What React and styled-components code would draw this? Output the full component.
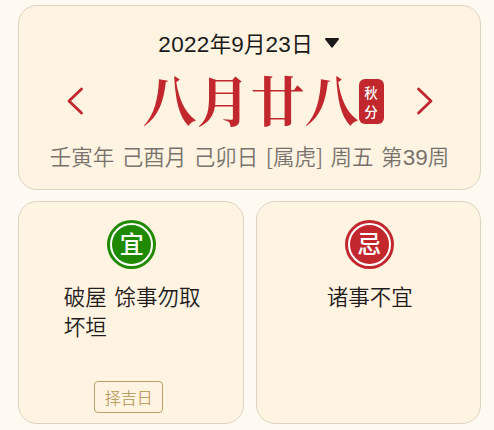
import React from 'react'
import styled, {createGlobalStyle} from 'styled-components'

const GlobalStyle = createGlobalStyle`
  * {
    box-sizing: border-box;
  }
  body {
    margin: 0;
    background-color: #fffaf1;
    font-family: "Liberation Sans", "Noto Sans CJK SC", sans-serif;
  }
`;

const Page = styled.div`
  width: 494px;
  height: 430px;
  padding: 5px 13px 0 18px;
  display: flex;
  flex-direction: column;
  gap: 11px;
  overflow: hidden;
`;

const Card = styled.section`
  display: flex;
  flex-direction: column;
  align-items: center;
  background-color: #fff3e2;
  border: 1px solid #ddd3c0;
  border-radius: 19px;
`;

const DateCard = styled(Card)`
  height: 185px;
  padding-top: 21px;
`;

const DateRow = styled.button`
  display: flex;
  align-items: center;
  gap: 11px;
  height: 30px;
  margin-right: 1px;
  padding: 0;
  border: none;
  background: transparent;
  font-family: inherit;
  font-size: 21.5px;
  color: #1a1a1a;
  white-space: nowrap;

  svg {
    margin-bottom: -1px;
  }
`;

const Digits = styled.span`
  font-size: 22.5px;
  letter-spacing: 0.3px;
`;

const LunarRow = styled.div`
  width: 100%;
  height: 80px;
  margin-top: 4px;
  padding: 0 46px 0 47px;
  display: flex;
  align-items: center;
  justify-content: space-between;
`;

const Arrow = styled.button`
  display: flex;
  padding: 0;
  border: none;
  background: transparent;
  color: #c1272d;
`;

const Lunar = styled.div`
  display: flex;
  align-items: center;
  margin-left: 26px;
`;

const LunarDay = styled.h1`
  margin: 0;
  padding-bottom: 5px;
  font-family: "Noto Serif CJK SC", "Noto Serif SC", "Source Han Serif SC", "Noto Sans CJK SC", serif;
  font-size: 54px;
  font-weight: 700;
  line-height: 75px;
  color: #c1272d;
`;

const SolarTerm = styled.div`
  width: 25px;
  height: 45px;
  padding-top: 4px;
  display: flex;
  flex-direction: column;
  align-items: center;
  justify-content: center;
  border-radius: 6px;
  background-color: #c1272d;
  color: #fff;
  font-size: 13.5px;
  font-weight: 500;
  line-height: 19px;
`;

const Detail = styled.div`
  display: flex;
  gap: 7.5px;
  height: 32px;
  line-height: 30px;
  font-family: "Noto Sans CJK SC", sans-serif;
  font-size: 21.5px;
  font-weight: 350;
  color: #77726c;
  white-space: nowrap;

  ${Digits} {
    font-family: "Liberation Sans", sans-serif;
    font-size: 22.5px;
    letter-spacing: 0;
  }
`;

const Columns = styled.div`
  display: flex;
  gap: 12px;
`;

const AdviceCard = styled(Card)`
  width: 226px;
  height: 223px;
  padding: 18px 0 10px;
`;

const Seal = styled.div`
  width: 49px;
  height: 49px;
  margin-left: 2px;
  padding: 3px;
  border-radius: 50%;
  background-color: ${props => props.$color};
`;

const SealRing = styled.div`
  height: 100%;
  display: flex;
  align-items: center;
  justify-content: center;
  border: 2px solid #fff;
  border-radius: 50%;
  color: #fff;
  font-size: 24px;
  font-weight: 500;
  line-height: 1;
`;

const Advice = styled.p`
  width: ${props => props.$width};
  margin: 12px 0 0 4px;
  font-family: "Noto Sans CJK SC", sans-serif;
  font-size: 21.5px;
  font-weight: 350;
  line-height: 30px;
  word-spacing: 3px;
  color: #1f1d1b;
`;

const PickButton = styled.button`
  width: 69px;
  height: 32px;
  margin: auto 4px 0 0;
  padding: 0;
  border: 1px solid #bea066;
  border-radius: 4px;
  background: transparent;
  font-family: "Noto Sans CJK SC", sans-serif;
  font-size: 16px;
  font-weight: 350;
  color: #bea066;
`;

const details = ['壬寅年', '己酉月', '己卯日', '[属虎]', '周五', '第39周'];

const spaced = (text) =>
  text.split(/(\d+)/).map((part, i) => (/\d/.test(part) ? <Digits key={i}>{part}</Digits> : part));

const Chevron = ({points}) => (
  <svg width="18" height="28" viewBox="0 0 18 28" fill="none" stroke="currentColor"
    strokeWidth="2.8" strokeLinecap="round" strokeLinejoin="round">
    <polyline points={points} />
  </svg>
)

const App = () => {
  return (
    <>
      <GlobalStyle />
      <Page>
        <DateCard>
          <DateRow>
            <span>{spaced('2022年9月23日')}</span>
            <svg width="16" height="12" viewBox="0 0 16 12">
              <path d="M2 2H14L8 9.7Z" fill="#1a1a1a" stroke="#1a1a1a" strokeWidth="2" strokeLinejoin="round" />
            </svg>
          </DateRow>
          <LunarRow>
            <Arrow aria-label="前一天"><Chevron points="15.5,2 3,14 15.5,26" /></Arrow>
            <Lunar>
              <LunarDay>八月廿八</LunarDay>
              <SolarTerm>
                <span>秋</span>
                <span>分</span>
              </SolarTerm>
            </Lunar>
            <Arrow aria-label="后一天"><Chevron points="2.5,2 15,14 2.5,26" /></Arrow>
          </LunarRow>
          <Detail>
            {details.map(item => <span key={item}>{spaced(item)}</span>)}
          </Detail>
        </DateCard>
        <Columns>
          <AdviceCard>
            <Seal $color="#1f8a00"><SealRing>宜</SealRing></Seal>
            <Advice $width="138px">破屋 馀事勿取坏垣</Advice>
            <PickButton>择吉日</PickButton>
          </AdviceCard>
          <AdviceCard>
            <Seal $color="#c1272d"><SealRing>忌</SealRing></Seal>
            <Advice $width="87px">诸事不宜</Advice>
          </AdviceCard>
        </Columns>
      </Page>
    </>
  )
}

export default App
